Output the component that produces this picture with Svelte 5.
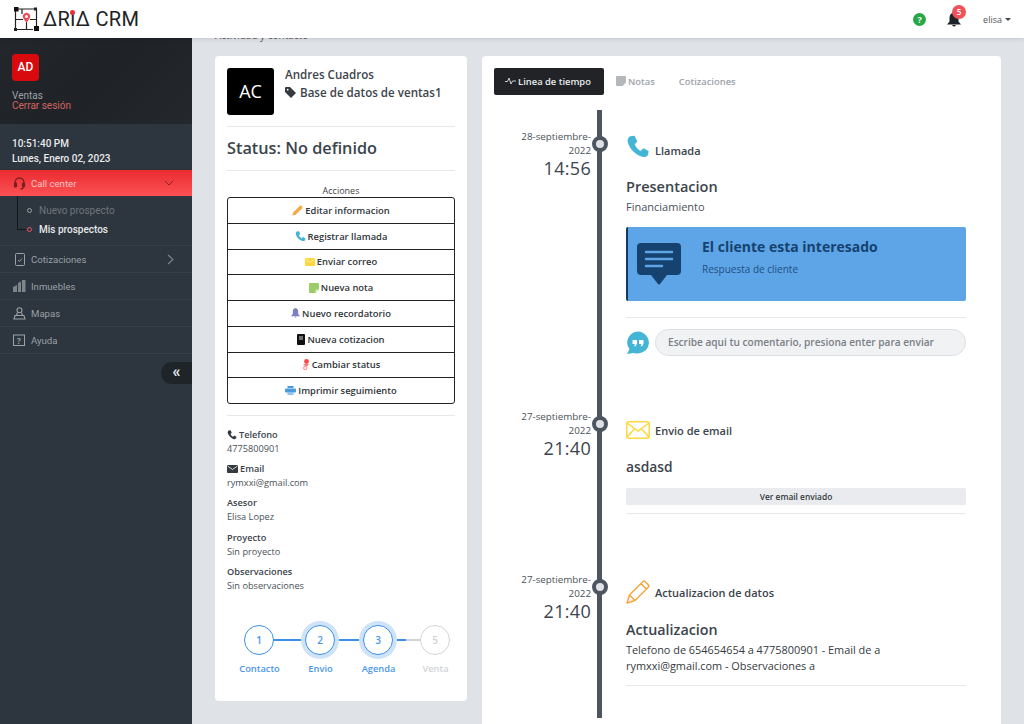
<script>
	const actions = [
		{ label: 'Editar informacion', icon: 'pencil' },
		{ label: 'Registrar llamada', icon: 'phone' },
		{ label: 'Enviar correo', icon: 'mail' },
		{ label: 'Nueva nota', icon: 'note' },
		{ label: 'Nuevo recordatorio', icon: 'bell' },
		{ label: 'Nueva cotizacion', icon: 'doc' },
		{ label: 'Cambiar status', icon: 'status' },
		{ label: 'Imprimir seguimiento', icon: 'print' }
	];
	const details = [
		{ label: 'Asesor', value: 'Elisa Lopez' },
		{ label: 'Proyecto', value: 'Sin proyecto' },
		{ label: 'Observaciones', value: 'Sin observaciones' }
	];
	const steps = [
		{ n: 1, label: 'Contacto', state: 'done' },
		{ n: 2, label: 'Envio', state: 'glow' },
		{ n: 3, label: 'Agenda', state: 'glow' },
		{ n: 5, label: 'Venta', state: 'off' }
	];
	const phonePath = 'M3 1 L6.5 0.5 L8.5 5 L6.5 7 C7.5 9.5 9 11 11 12 L13 10 L17 12 L16.5 15 C15.5 16.5 13.5 17 11 16 C6.5 14 3 10.5 1.5 6 C0.8 4 1.5 2 3 1 Z';
</script>

{#snippet actionIcon(name)}
	{#if name === 'pencil'}
		<svg width="11" height="11" viewBox="0 0 12 12"><path d="M0.5 11.5 L1.5 8 L8.5 1 Q9.5 0.2 10.5 1 L11 1.5 Q11.8 2.5 11 3.5 L4 10.5 Z" fill="#f5a742" /></svg>
	{:else if name === 'phone'}
		<svg width="11" height="11" viewBox="0 0 18 18"><path d={phonePath} fill="#45b5d6" /></svg>
	{:else if name === 'mail'}
		<svg width="10" height="8" viewBox="0 0 10 8"><rect width="10" height="8" rx="1" fill="#ffd83d" /><path d="M0.5 1 L5 4.5 L9.5 1" fill="none" stroke="#fff3b0" stroke-width="0.8" /></svg>
	{:else if name === 'note'}
		<svg width="10" height="10" viewBox="0 0 10 10"><path d="M0 1 Q0 0 1 0 H9 Q10 0 10 1 V6.5 L6.5 10 H1 Q0 10 0 9 Z" fill="#9ccc65" /><path d="M6.5 10 V7 Q6.5 6.5 7 6.5 H10 Z" fill="#dcedc8" /></svg>
	{:else if name === 'bell'}
		<svg width="9" height="10" viewBox="0 0 10 11"><path d="M5 0 Q8 0.5 8 4 V6.5 L10 9 H0 L2 6.5 V4 Q2 0.5 5 0 Z M3.8 9.6 H6.2 Q5 11.6 3.8 9.6 Z" fill="#7c7fc4" /></svg>
	{:else if name === 'doc'}
		<svg width="8" height="11" viewBox="0 0 8 11"><rect width="8" height="11" rx="1" fill="#111" /><path d="M2 3 H6 M2 5 H6" stroke="#fff" stroke-width="0.8" /></svg>
	{:else if name === 'status'}
		<svg width="8" height="11" viewBox="0 0 8 11"><circle cx="4.5" cy="2.5" r="2.4" fill="#f44" /><path d="M1 5 H7 L5.5 7 H3 Z" fill="#f77" /><circle cx="3.2" cy="9" r="1.6" fill="none" stroke="#f99" stroke-width="1.2" /></svg>
	{:else}
		<svg width="11" height="9" viewBox="0 0 11 9"><rect x="2.5" y="0" width="6" height="2" fill="#4a9bdc" /><rect x="0" y="2.5" width="11" height="4" rx="1" fill="#4a9bdc" /><rect x="2.5" y="6" width="6" height="3" fill="#8ec3ea" /></svg>
	{/if}
{/snippet}

{#snippet timeMark(date, time)}
	<div class="when">
		<div class="date">{date}</div>
		<div class="time">{time}</div>
		<span class="dot"></span>
	</div>
{/snippet}

<header class="topbar">
	<div class="logo">
		<svg width="25" height="24" viewBox="0 0 25 24">
			<g fill="none" stroke="#222" stroke-width="1.2">
				<path d="M2 2 H22.5 V21" />
				<path d="M1.5 2 V22.5 H19" />
				<path d="M1.5 12.5 H9 M16 12.5 H22.5 M12.5 15 V22.5 M8 2 V7" />
			</g>
			<rect x="0" y="0" width="4.5" height="4.5" fill="#111" />
			<rect x="20" y="0.5" width="3" height="3" fill="#222" />
			<rect x="20" y="19" width="5" height="5" fill="#111" />
			<rect x="0" y="21" width="3" height="3" fill="#222" />
			<path d="M12.5 16 L9.5 11.5 A3.6 3.6 0 1 1 15.5 11.5 Z" fill="#ef4a55" />
			<circle cx="12.5" cy="9.5" r="1.5" fill="#fff" />
		</svg>
		<span class="logo-text">ΔR<span class="logo-i">I</span>Δ CRM</span>
	</div>
	<div class="top-right">
		<span class="help">?</span>
		<span class="bell">
			<svg width="14" height="15" viewBox="0 0 14 15"><path d="M7 0.5 Q11.5 1 11.5 6 V9.5 L14 12.5 H0 L2.5 9.5 V6 Q2.5 1 7 0.5 Z M5 13 H9 Q7 16 5 13 Z" fill="#1d2328" /></svg>
			<span class="badge">5</span>
		</span>
		<span class="user">elisa <i class="caret"></i></span>
	</div>
</header>

<div class="shell">
	<aside class="sidebar">
		<div class="profile">
			<div class="ad">AD</div>
			<div class="role">Ventas</div>
			<div class="logout">Cerrar sesión</div>
		</div>
		<div class="clock">
			<div class="clock-time">10:51:40 PM</div>
			<div class="clock-date">Lunes, Enero 02, 2023</div>
		</div>
		<nav>
			<div class="item current">
				<svg width="14" height="14" viewBox="0 0 14 14" fill="none" stroke="#7a1e22" stroke-width="1.3"><path d="M2.5 8 V6.5 A4.5 4.5 0 0 1 11.5 6.5 V8" /><rect x="2" y="7" width="2" height="4" rx="1" fill="#7a1e22" /><rect x="10" y="7" width="2" height="4" rx="1" fill="#7a1e22" /><path d="M11 11.5 Q10.5 13 8 13" /></svg>
				<span>Call center</span>
				<svg class="chev" width="10" height="10" viewBox="0 0 10 10" fill="none" stroke="#8c2226" stroke-width="1"><path d="M1 3 L5 7 L9 3" /></svg>
			</div>
			<div class="sub">
				<div class="sub-row"><i class="ring"></i>Nuevo prospecto</div>
				<div class="sub-row on"><i class="ring"></i>Mis prospectos</div>
			</div>
			<div class="item">
				<svg width="11" height="13" viewBox="0 0 11 13" fill="none" stroke="#9aa1a8"><rect x="1.5" y="0.5" width="9" height="12" rx="1" /><path d="M4 7 L5.5 8.5 L8 5.5" /></svg>
				<span>Cotizaciones</span>
				<svg class="chev" width="8" height="11" viewBox="0 0 8 11" fill="none" stroke="#7d858c" stroke-width="1.1"><path d="M2 1 L7 5.5 L2 10" /></svg>
			</div>
			<div class="item">
				<svg width="13" height="12" viewBox="0 0 13 12" fill="#7d858c"><path d="M0 12 V7 L4 5 V12 Z M5 12 V3 L8 1.5 V12 Z M9 12 V0 L12.5 0 V12 Z" /></svg>
				<span>Inmuebles</span>
			</div>
			<div class="item">
				<svg width="13" height="13" viewBox="0 0 13 13" fill="none" stroke="#9aa1a8" stroke-width="1.1"><circle cx="6.5" cy="3.2" r="2.5" /><path d="M4.5 5.5 L3.5 8.5 H9.5 L8.5 5.5 M1 12 L2 8.5 H11 L12 12 Z" /></svg>
				<span>Mapas</span>
			</div>
			<div class="item">
				<svg width="13" height="13" viewBox="0 0 13 13"><rect x="0.5" y="1" width="11" height="10.5" fill="none" stroke="#9aa1a8" /><text x="6" y="9.5" font-size="8" font-weight="700" text-anchor="middle" fill="#9aa1a8" font-family="Open Sans">?</text></svg>
				<span>Ayuda</span>
			</div>
		</nav>
		<div class="collapse-row"><span class="collapse">«</span></div>
	</aside>

	<main class="content">
		<div class="crumb">Actividad y contacto</div>
		<div class="columns">
			<section class="card left">
				<div class="who">
					<div class="avatar">AC</div>
					<div class="who-text">
						<div>Andres Cuadros</div>
						<div class="tag-line">
							<svg width="11" height="11" viewBox="0 0 11 11"><path d="M0 1 Q0 0 1 0 H5 L11 6 L6 11 L0 5 Z" fill="#343a40" /><circle cx="2.7" cy="2.7" r="0.9" fill="#fff" /></svg>
							Base de datos de ventas1
						</div>
					</div>
				</div>
				<hr />
				<h2 class="status">Status: No definido</h2>
				<hr />
				<div class="actions-title">Acciones</div>
				<div class="actions">
					{#each actions as action}
						<div class="action">
							{@render actionIcon(action.icon)}
							<span>{action.label}</span>
						</div>
					{/each}
				</div>
				<hr class="mt2" />
				<dl class="info">
					<dt>
						<svg width="10" height="10" viewBox="0 0 18 18"><path d={phonePath} fill="#343a40" /></svg>
						Telefono
					</dt>
					<dd>4775800901</dd>
					<dt>
						<svg width="11" height="8" viewBox="0 0 11 8"><rect width="11" height="8" rx="1" fill="#343a40" /><path d="M0.5 1 L5.5 4.5 L10.5 1" fill="none" stroke="#fff" stroke-width="0.8" /></svg>
						Email
					</dt>
					<dd>rymxxi@gmail.com</dd>
					{#each details as d}
						<dt>{d.label}</dt>
						<dd>{d.value}</dd>
					{/each}
				</dl>
				<div class="steps">
					{#each steps as s}
						<div class="step {s.state}">
							<span class="circle">{s.n}</span>
							<span class="step-label">{s.label}</span>
						</div>
					{/each}
				</div>
			</section>

			<section class="card right">
				<div class="tabs">
					<div class="tab selected">
						<svg width="11" height="8" viewBox="0 0 11 8" fill="none" stroke="#ccc" stroke-width="1"><path d="M0 4.5 H2.5 L4 1 L6 7 L7.5 4 H11" /></svg>
						Linea de tiempo
					</div>
					<div class="tab">
						<svg width="10" height="10" viewBox="0 0 10 10"><path d="M0 1 Q0 0 1 0 H9 Q10 0 10 1 V6.5 L6.5 10 H1 Q0 10 0 9 Z" fill="#b5b8bb" /></svg>
						Notas
					</div>
					<div class="tab">Cotizaciones</div>
				</div>

				<div class="timeline">
					<article class="event first">
						{@render timeMark('28-septiembre-2022', '14:56')}
						<div class="body">
							<div class="kind">
								<svg width="24" height="24" viewBox="0 0 18 18"><path d={phonePath} fill="#45b5d6" /></svg>
								<span>Llamada</span>
							</div>
							<h3>Presentacion</h3>
							<p class="sub-text">Financiamiento</p>
							<div class="notice">
								<svg width="44" height="42" viewBox="0 0 44 42">
									<path d="M4 0 H40 Q44 0 44 4 V28 Q44 32 40 32 H30 L23 41 Q22 42 21 41 L14 32 H4 Q0 32 0 28 V4 Q0 0 4 0 Z" fill="#16426f" />
									<path d="M9 9 H35 M9 16 H35 M9 23 H25" stroke="#5fa5e6" stroke-width="2.5" stroke-linecap="round" />
								</svg>
								<div>
									<div class="notice-title">El cliente esta interesado</div>
									<div class="notice-sub">Respuesta de cliente</div>
								</div>
							</div>
							<hr />
							<div class="comment">
								<svg width="24" height="24" viewBox="0 0 24 24">
									<path d="M12 0.5 A11.5 11 0 1 1 8 22 L1 23 L3.5 18 A11.5 11 0 0 1 12 0.5 Z" fill="#45b5d6" />
									<path d="M6.5 9 H11 V12.5 Q10.5 15 8 15.5 L9 13 H6.5 Z M13 9 H17.5 V12.5 Q17 15 14.5 15.5 L15.5 13 H13 Z" fill="#fff" />
								</svg>
								<div class="comment-box">Escribe aqui tu comentario, presiona enter para enviar</div>
							</div>
						</div>
					</article>

					<article class="event second">
						{@render timeMark('27-septiembre-2022', '21:40')}
						<div class="body">
							<div class="kind">
								<svg width="24" height="18" viewBox="0 0 24 18" fill="none" stroke="#ffd83d" stroke-width="1.5"><rect x="0.8" y="0.8" width="22.4" height="16.4" rx="2" /><path d="M1 2 L12 10 L23 2 M1 16 L8.5 8 M23 16 L15.5 8" /></svg>
								<span>Envio de email</span>
							</div>
							<h3 class="plain">asdasd</h3>
							<div class="see-mail">Ver email enviado</div>
							<hr />
						</div>
					</article>

					<article class="event third">
						{@render timeMark('27-septiembre-2022', '21:40')}
						<div class="body">
							<div class="kind">
								<svg width="24" height="24" viewBox="0 0 24 24" fill="none" stroke="#f5a742" stroke-width="1.5" stroke-linejoin="round"><path d="M1 23 L3.5 15 L17 1.5 Q18 0.7 19 1.5 L22.5 5 Q23.3 6 22.5 7 L9 20.5 Z M3.5 15 L9 20.5 M15 3.5 L20.5 9" /></svg>
								<span>Actualizacion de datos</span>
							</div>
							<h3 class="update">Actualizacion</h3>
							<p class="long-text">Telefono de 654654654 a 4775800901 - Email de a rymxxi@gmail.com - Observaciones a</p>
							<hr />
						</div>
					</article>
				</div>
			</section>
		</div>
	</main>
</div>

<style>
	:global(body) {
		margin: 0;
		overflow: hidden;
		background: #dfe2e7;
		font-family: 'Open Sans', sans-serif;
		color: #343a40;
	}
	svg {
		flex: none;
	}
	.topbar {
		position: relative;
		z-index: 2;
		height: 38px;
		background: #fff;
		display: flex;
		align-items: center;
		justify-content: space-between;
		box-shadow: 0 1px 4px rgba(0, 0, 0, 0.12);
	}
	.logo {
		display: flex;
		align-items: center;
		gap: 4px;
		padding-left: 14px;
	}
	.logo-text {
		font-family: 'Roboto', sans-serif;
		font-size: 20px;
		letter-spacing: 0.3px;
		color: #222;
		font-weight: 400;
		white-space: nowrap;
	}
	.logo-i {
		position: relative;
	}
	.logo-i::before {
		content: '';
		position: absolute;
		left: 0;
		top: 3px;
		width: 5px;
		height: 5px;
		border-radius: 50%;
		background: #ef2b36;
	}
	.top-right {
		display: flex;
		align-items: center;
		padding-right: 13px;
		font-size: 9px;
	}
	.help {
		width: 13px;
		height: 13px;
		border-radius: 50%;
		background: #28a745;
		color: #fff;
		font-size: 9px;
		font-weight: 700;
		line-height: 13px;
		text-align: center;
		margin-right: 21px;
	}
	.bell {
		position: relative;
		display: flex;
		margin-right: 22px;
	}
	.badge {
		position: absolute;
		left: 5px;
		top: -7px;
		width: 14px;
		height: 14px;
		border-radius: 50%;
		background: #f0525a;
		color: #fff;
		font-size: 8px;
		font-weight: 600;
		line-height: 14px;
		text-align: center;
	}
	.user {
		color: #555;
		display: flex;
		align-items: center;
		gap: 3px;
	}
	.caret {
		border-left: 3px solid transparent;
		border-right: 3px solid transparent;
		border-top: 3px solid #444;
	}
	.shell {
		display: flex;
		height: 686px;
		overflow: hidden;
	}
	.sidebar {
		width: 192px;
		flex: none;
		background: #2d353e;
		font-family: 'Roboto', sans-serif;
		font-size: 9.6px;
		color: #9aa1a8;
	}
	.profile {
		height: 86px;
		box-sizing: border-box;
		padding: 16px 12px 0;
		background: linear-gradient(135deg, #23272c 0%, #1f2327 50%, #24282d 100%);
		font-size: 10px;
	}
	.ad {
		width: 27px;
		height: 27px;
		border-radius: 4px;
		background: #d90a0e;
		color: #fff;
		font-size: 12px;
		font-weight: 500;
		line-height: 27px;
		text-align: center;
		margin-bottom: 10px;
	}
	.role {
		line-height: 10px;
	}
	.logout {
		color: #d4645f;
		line-height: 10px;
	}
	.clock {
		height: 46px;
		box-sizing: border-box;
		padding: 14px 12px 0;
		color: #e8eaec;
		font-weight: 500;
		font-size: 10px;
	}
	.clock-date {
		margin-top: 4px;
	}
	.item {
		height: 27px;
		box-sizing: border-box;
		display: flex;
		align-items: center;
		gap: 4px;
		padding: 0 18px 0 12px;
		border-bottom: 1px solid #363f48;
	}
	.item svg:first-child {
		width: 15px;
	}
	.item .chev {
		margin-left: auto;
	}
	.current {
		height: 26px;
		background: linear-gradient(#ea2b2f, #fb5256);
		color: #f9c4c4;
		border-bottom: 0;
	}
	.sub {
		height: 50px;
		box-sizing: border-box;
		padding: 5px 0 0 27px;
		border-bottom: 1px solid #363f48;
		position: relative;
		font-size: 10px;
	}
	.sub::before {
		content: '';
		position: absolute;
		left: 17px;
		top: 0;
		width: 8px;
		height: 33px;
		border-left: 1px solid #14181c;
		border-bottom: 1px solid #14181c;
	}
	.sub-row {
		height: 19px;
		display: flex;
		align-items: center;
		gap: 7px;
		color: #6d757d;
	}
	.sub-row.on {
		color: #e6e8ea;
		font-weight: 500;
	}
	.ring {
		width: 3px;
		height: 3px;
		border: 1px solid #9aa1a8;
		border-radius: 50%;
	}
	.on .ring {
		border-color: #f0525a;
	}
	.collapse-row {
		display: flex;
		justify-content: flex-end;
		padding-top: 8px;
	}
	.collapse {
		width: 31px;
		height: 22px;
		border-radius: 11px 0 0 11px;
		background: #1f2428;
		color: #e8eaec;
		font-size: 16px;
		font-weight: 700;
		line-height: 19px;
		text-align: center;
	}
	.content {
		flex: 1;
		min-width: 0;
		padding-left: 23px;
	}
	.crumb {
		margin-top: -9px;
		height: 27px;
		font-size: 10px;
		line-height: 12px;
		color: #555;
	}
	.columns {
		display: flex;
		align-items: flex-start;
		gap: 15px;
	}
	.card {
		background: #fff;
		border-radius: 4px;
		box-sizing: border-box;
	}
	hr {
		border: 0;
		border-top: 1px solid #e6e8ea;
		margin: 0;
	}
	.left {
		width: 252px;
		height: 645px;
		padding: 12px 12px 0;
	}
	.who {
		display: flex;
		gap: 11px;
		height: 58px;
		font-size: 11.6px;
		font-weight: 600;
		line-height: 17.5px;
		color: #3c444c;
	}
	.who-text {
		margin-top: -2px;
	}
	.avatar {
		width: 47px;
		height: 47px;
		border-radius: 3px;
		background: #000;
		color: #fff;
		font-size: 18px;
		font-weight: 400;
		line-height: 47px;
		text-align: center;
	}
	.tag-line {
		display: flex;
		align-items: center;
		gap: 4px;
		white-space: nowrap;
	}
	.status {
		font-size: 16.3px;
		font-weight: 600;
		line-height: 22px;
		margin: 10px 0 11px;
		color: #3c444c;
	}
	.actions-title {
		text-align: center;
		font-size: 9px;
		line-height: 12px;
		margin-top: 14px;
		color: #444;
	}
	.actions {
		border: 1px solid #222;
		border-radius: 3px;
	}
	.action {
		height: 24.75px;
		display: flex;
		align-items: center;
		justify-content: center;
		gap: 2px;
		font-size: 9.4px;
		font-weight: 600;
		color: #2f353a;
		border-top: 1px solid #222;
	}
	.action:first-child {
		border-top: 0;
	}
	.mt2 {
		margin-top: 11px;
	}
	.info {
		margin: 12px 0 0;
		font-size: 9.2px;
		line-height: 14px;
	}
	.info dt {
		font-weight: 600;
		display: flex;
		align-items: center;
		gap: 2px;
		color: #3c444c;
	}
	.info dd {
		margin: 0 0 6.2px;
		color: #4a5158;
	}
	.steps {
		display: flex;
		margin: 32px 0 0 12px;
	}
	.step {
		position: relative;
		flex: none;
		width: 61px;
		display: flex;
		flex-direction: column;
		align-items: flex-start;
		font-size: 9.3px;
		font-weight: 600;
		color: #4a97ea;
	}
	.step:nth-child(2) {
		width: 58px;
	}
	.step:nth-child(3) {
		width: 57px;
	}
	.circle {
		position: relative;
		z-index: 1;
		width: 28px;
		height: 28px;
		margin-left: 5px;
		border: 1.5px solid #3b8fe8;
		border-radius: 50%;
		background: #fff;
		color: #4a97ea;
		font-size: 10px;
		font-weight: 600;
		line-height: 28px;
		text-align: center;
	}
	.step::after {
		content: '';
		position: absolute;
		left: 30px;
		top: 14px;
		width: 36px;
		height: 2px;
		background: #3b8fe8;
	}
	.step:nth-child(3)::after {
		background: linear-gradient(90deg, #3b8fe8 50%, #ced3d8 50%);
	}
	.step:last-child::after {
		display: none;
	}
	.glow .circle {
		box-shadow: 0 0 0 4px #cfe3f8;
	}
	.off .circle {
		border-color: #d0d4d8;
		color: #cfd3d7;
	}
	.off {
		color: #d0d4d8;
	}
	.step-label {
		margin-top: 8px;
		width: 41px;
		line-height: 12px;
		white-space: nowrap;
		display: flex;
		justify-content: center;
	}
	.right {
		width: 519px;
		height: 680px;
		padding: 12px 35px 0 12px;
	}
	.tabs {
		display: flex;
		align-items: center;
		font-size: 9.4px;
		font-weight: 600;
		color: #9da3a9;
	}
	.tab {
		height: 27px;
		box-sizing: border-box;
		display: flex;
		align-items: center;
		gap: 2px;
		padding: 0 12px 1px;
	}
	.tab.selected {
		background: #212326;
		color: #e8eaec;
		border-radius: 2px;
		width: 110px;
		justify-content: center;
		padding: 0 2px 1px 0;
	}
	.timeline {
		position: relative;
		margin-top: 15px;
		height: 608px;
	}
	.timeline::before {
		content: '';
		position: absolute;
		left: 103px;
		top: 0;
		bottom: 0;
		width: 5px;
		background: #4c5560;
	}
	.event {
		display: flex;
	}
	.when {
		position: relative;
		width: 97px;
		text-align: right;
		flex: none;
		color: #4a5158;
	}
	.date {
		font-size: 9.8px;
		line-height: 14px;
		padding-left: 16px;
	}
	.time {
		font-size: 18px;
		font-weight: 400;
		line-height: 20px;
		letter-spacing: 0.3px;
		color: #3c444c;
	}
	.dot {
		position: absolute;
		left: 97.5px;
		top: 6px;
		width: 8px;
		height: 8px;
		border: 4px solid #4c5560;
		border-radius: 50%;
		background: #dfe2e7;
	}
	.body {
		width: 340px;
		margin-left: 35px;
		flex: none;
	}
	.first {
		padding-top: 20px;
		height: 280px;
	}
	.second {
		height: 163px;
	}
	.third {
		height: 140px;
	}
	.second .body {
		padding-top: 7px;
	}
	.third .body {
		padding-top: 6px;
	}
	.kind {
		display: flex;
		align-items: center;
		gap: 5px;
		font-size: 11px;
		font-weight: 600;
		color: #3c444c;
		height: 26px;
	}
	.first .kind {
		align-items: flex-end;
		margin-top: 3px;
	}
	.first .kind span {
		margin-bottom: 1px;
	}
	h3 {
		font-size: 14.5px;
		font-weight: 600;
		line-height: 20px;
		margin: 18px 0 0;
		color: #3c444c;
	}
	.sub-text {
		font-size: 11px;
		line-height: 14px;
		margin: 3px 0 0;
		color: #4a5158;
	}
	.notice {
		margin-top: 13px;
		height: 74px;
		box-sizing: border-box;
		background: #5ea5e7;
		border-left: 2px solid #123a66;
		border-radius: 2px;
		display: flex;
		gap: 21px;
		padding: 12px 0 0 9px;
	}
	.notice svg {
		margin-top: 4px;
	}
	.notice-title {
		font-size: 14px;
		font-weight: 700;
		line-height: 15px;
		color: #16426f;
	}
	.notice-sub {
		margin-top: 8px;
		font-size: 10px;
		line-height: 14px;
		color: #1f4f82;
	}
	.first hr {
		margin-top: 16px;
	}
	.comment {
		display: flex;
		align-items: center;
		gap: 5px;
		margin-top: 11px;
	}
	.comment-box {
		flex: 1;
		height: 27px;
		box-sizing: border-box;
		background: #f1f2f4;
		border: 1px solid #dcdfe2;
		border-radius: 14px;
		font-size: 10.1px;
		font-weight: 600;
		line-height: 25px;
		padding-left: 12px;
		color: #7a8087;
		white-space: nowrap;
	}
	.plain {
		margin-top: 14px;
		font-size: 13.8px;
	}
	.see-mail {
		margin-top: 11px;
		height: 17px;
		background: #e9ebee;
		border-radius: 2px;
		font-size: 8.4px;
		font-weight: 600;
		line-height: 17px;
		text-align: center;
	}
	.second hr {
		margin-top: 8px;
	}
	.update {
		margin-top: 15px;
		font-size: 14.3px;
	}
	.long-text {
		font-size: 10.9px;
		line-height: 16px;
		margin: 2px 0 0;
	}
	.third hr {
		margin-top: 11px;
	}
</style>
